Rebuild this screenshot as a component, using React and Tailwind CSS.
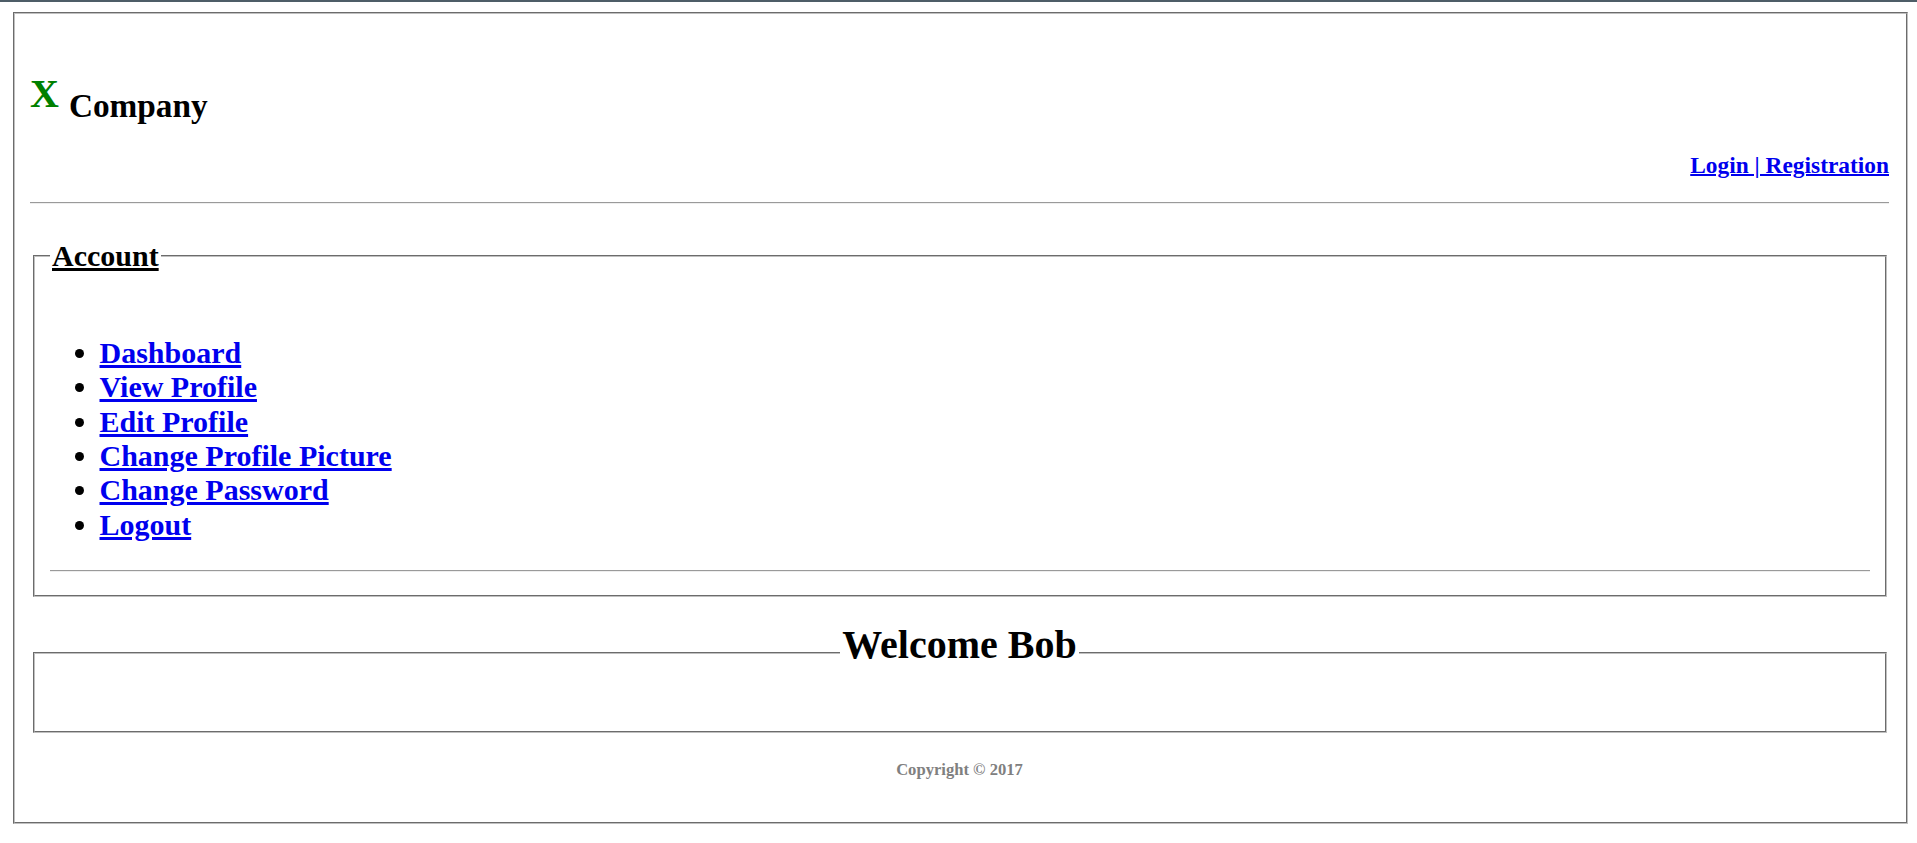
export default function App() {
  const links = [
    "Dashboard",
    "View Profile",
    "Edit Profile",
    "Change Profile Picture",
    "Change Password",
    "Logout",
  ];
  return (
    <div className="min-h-[843px] bg-white font-['Liberation_Serif','Times_New_Roman',serif] text-black">
      <div className="h-[2px] bg-[#4e5d67]" />
      <div className="ml-[13px] mr-[9px] mt-[10px] h-[812px] border-2 [border-style:groove] border-[#c0c0c0] pl-[15px] pr-[17px]">
        <h1 className="mt-[57px] h-[46px] text-[40px] leading-[46px] font-bold whitespace-nowrap">
          <span className="text-[#008000]">X</span>{" "}
          <span className="text-[33.3px] align-[-10px]">Company</span>
        </h1>
        <h3 className="mt-[35px] text-right text-[23.4px] leading-[27px] font-bold">
          <a href="#" className="text-[#0000ee] underline decoration-2">Login | Registration</a>
        </h3>
        <div className="mt-[22.5px] h-[2px] border-t border-b border-t-[#9a9a9a] border-b-[#eeeeee]" />
        <fieldset className="mt-[35.6px] mx-[2.5px] border-2 [border-style:groove] border-[#c0c0c0] px-[15px] pt-0 pb-[12.5px]">
          <legend className="px-[2.5px] text-[30px] leading-[34.5px] font-bold underline decoration-[3px]">Account</legend>
          <ul className="mt-[62.5px] list-disc pl-[50px] text-[30px] leading-[34.3px] font-bold">
            {links.map((l) => (
              <li key={l}>
                <a href="#" className="text-[#0000ee] underline decoration-[3px]">{l}</a>
              </li>
            ))}
          </ul>
          <div className="mt-[28.3px] mb-[10px] h-[2px] border-t border-b border-t-[#9a9a9a] border-b-[#eeeeee]" />
        </fieldset>
        <fieldset className="mt-[25.7px] mx-[2.5px] border-2 [border-style:groove] border-[#c0c0c0] px-[15px] pt-0 pb-[47px]">
          <legend align="center" className="mx-auto px-[2.5px] pb-[16px] text-[40px] leading-[46px] font-bold">Welcome Bob</legend>
        </fieldset>
        <h5 className="mt-[26.9px] text-center text-[16.6px] leading-[19px] font-bold text-[#808080]">Copyright © 2017</h5>
      </div>
    </div>
  );
}
